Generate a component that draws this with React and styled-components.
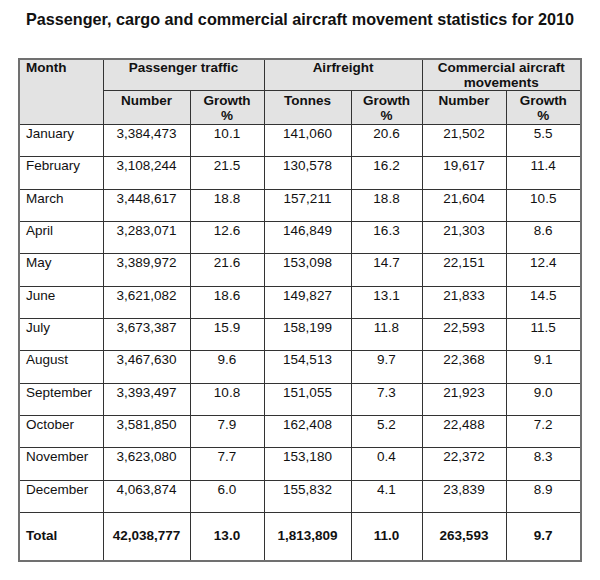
import styled, { createGlobalStyle } from "styled-components";

const GlobalStyle = createGlobalStyle`
  body {
    margin: 0;
    background: #ffffff;
    font-family: "Liberation Sans", Arial, sans-serif;
    color: #111;
  }
`;

const Page = styled.div`
  width: 600px;
  padding-top: 10px;
  display: flex;
  flex-direction: column;
  align-items: center;
`;

const Title = styled.h1`
  margin: 0 0 30px;
  font-size: 16.2px;
  line-height: 18px;
  font-weight: bold;
  text-align: center;
`;

const Table = styled.table`
  width: 562px;
  border-collapse: collapse;
  table-layout: fixed;
  border: 2px solid #707070;
  font-size: 13.5px;
  line-height: 14.5px;
`;

const Head = styled.th`
  background: #e3e3e3;
  border: 1px solid #333;
  font-weight: bold;
  text-align: ${(p) => (p.$left ? "left" : "center")};
  vertical-align: top;
  padding: ${(p) => (p.$sub ? "3px 6px 0" : "1px 6px 0")};
  height: ${(p) => p.$h || 0}px;
`;

const Cell = styled.td`
  border: 1px solid #333;
  text-align: ${(p) => (p.$left ? "left" : "center")};
  vertical-align: ${(p) => (p.$total ? "middle" : "top")};
  font-weight: ${(p) => (p.$total ? "bold" : "normal")};
  padding: ${(p) => (p.$total ? "0 6px" : "2px 6px 0")};
  height: ${(p) => (p.$total ? 47 : 29.35)}px;
`;

const widths = [84, 87, 74, 87, 71, 84, 75];

const rows = [
  ["January", "3,384,473", "10.1", "141,060", "20.6", "21,502", "5.5"],
  ["February", "3,108,244", "21.5", "130,578", "16.2", "19,617", "11.4"],
  ["March", "3,448,617", "18.8", "157,211", "18.8", "21,604", "10.5"],
  ["April", "3,283,071", "12.6", "146,849", "16.3", "21,303", "8.6"],
  ["May", "3,389,972", "21.6", "153,098", "14.7", "22,151", "12.4"],
  ["June", "3,621,082", "18.6", "149,827", "13.1", "21,833", "14.5"],
  ["July", "3,673,387", "15.9", "158,199", "11.8", "22,593", "11.5"],
  ["August", "3,467,630", "9.6", "154,513", "9.7", "22,368", "9.1"],
  ["September", "3,393,497", "10.8", "151,055", "7.3", "21,923", "9.0"],
  ["October", "3,581,850", "7.9", "162,408", "5.2", "22,488", "7.2"],
  ["November", "3,623,080", "7.7", "153,180", "0.4", "22,372", "8.3"],
  ["December", "4,063,874", "6.0", "155,832", "4.1", "23,839", "8.9"],
];

const total = ["Total", "42,038,777", "13.0", "1,813,809", "11.0", "263,593", "9.7"];

export default function App() {
  return (
    <>
      <GlobalStyle />
      <Page>
        <Title>Passenger, cargo and commercial aircraft movement statistics for 2010</Title>
        <Table>
          <colgroup>
            {widths.map((w, i) => (
              <col key={i} style={{ width: w }} />
            ))}
          </colgroup>
          <thead>
            <tr>
              <Head rowSpan={2} $left $h={28}>Month</Head>
              <Head colSpan={2} $h={28}>Passenger traffic</Head>
              <Head colSpan={2} $h={28}>Airfreight</Head>
              <Head colSpan={2} $h={28}>
                Commercial aircraft
                <br />
                movements
              </Head>
            </tr>
            <tr>
              <Head $sub $h={30}>Number</Head>
              <Head $sub $h={30}>Growth<br />%</Head>
              <Head $sub $h={30}>Tonnes</Head>
              <Head $sub $h={30}>Growth<br />%</Head>
              <Head $sub $h={30}>Number</Head>
              <Head $sub $h={30}>Growth<br />%</Head>
            </tr>
          </thead>
          <tbody>
            {rows.map((r) => (
              <tr key={r[0]}>
                {r.map((v, i) => (
                  <Cell key={i} $left={i === 0}>{v}</Cell>
                ))}
              </tr>
            ))}
            <tr>
              {total.map((v, i) => (
                <Cell key={i} $left={i === 0} $total>{v}</Cell>
              ))}
            </tr>
          </tbody>
        </Table>
      </Page>
    </>
  );
}
